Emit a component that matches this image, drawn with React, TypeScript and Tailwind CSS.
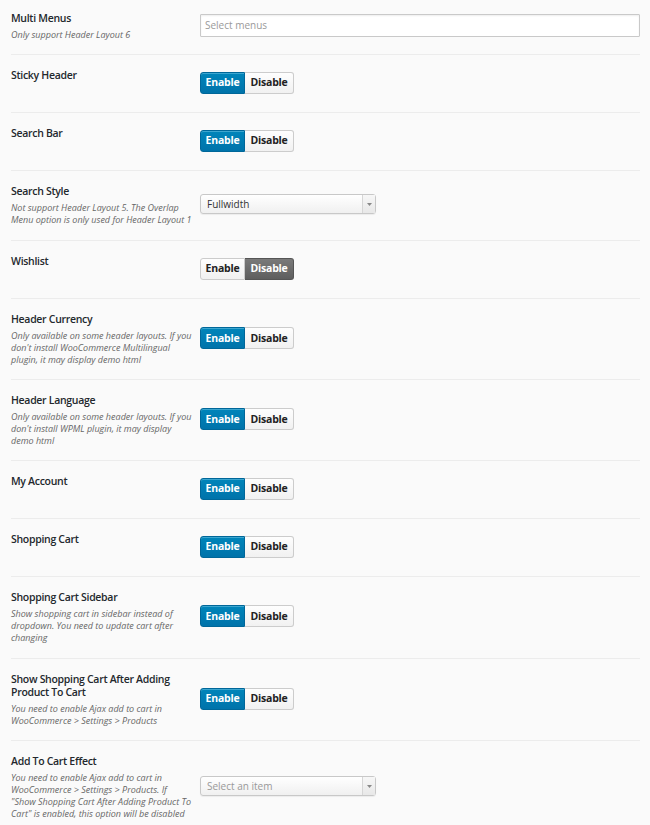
import React from "react";

type Ctl = "multi" | "on" | "off" | "select";
interface Row {
  title: string;
  desc?: string;
  ctl: Ctl;
  value?: string;
  placeholder?: boolean;
  extra?: boolean;
}

const rows: Row[] = [
  { title: "Multi Menus", desc: "Only support Header Layout 6", ctl: "multi" },
  { title: "Sticky Header", ctl: "on" },
  { title: "Search Bar", ctl: "on" },
  {
    title: "Search Style",
    desc: "Not support Header Layout 5. The Overlap Menu option is only used for Header Layout 1",
    ctl: "select",
    value: "Fullwidth",
    extra: true,
  },
  { title: "Wishlist", ctl: "off" },
  {
    title: "Header Currency",
    desc: "Only available on some header layouts. If you don't install WooCommerce Multilingual plugin, it may display demo html",
    ctl: "on",
  },
  {
    title: "Header Language",
    desc: "Only available on some header layouts. If you don't install WPML plugin, it may display demo html",
    ctl: "on",
  },
  { title: "My Account", ctl: "on" },
  { title: "Shopping Cart", ctl: "on" },
  {
    title: "Shopping Cart Sidebar",
    desc: "Show shopping cart in sidebar instead of dropdown. You need to update cart after changing",
    ctl: "on",
    extra: true,
  },
  {
    title: "Show Shopping Cart After Adding Product To Cart",
    desc: "You need to enable Ajax add to cart in WooCommerce > Settings > Products",
    ctl: "on",
  },
  {
    title: "Add To Cart Effect",
    desc: "You need to enable Ajax add to cart in WooCommerce > Settings > Products. If \"Show Shopping Cart After Adding Product To Cart\" is enabled, this option will be disabled",
    ctl: "select",
    value: "Select an item",
    placeholder: true,
  },
];

function Toggle({ on }: { on: boolean }) {
  return (
    <div className="flex h-[22px] text-[10.5px] font-bold leading-none tracking-[-0.2px]">
      <div
        className={
          on
            ? "flex w-[45px] items-center justify-center rounded-l-[3px] border border-[#006799] bg-gradient-to-b from-[#0085ba] to-[#0073aa] text-white shadow-[inset_0_1px_0_rgba(120,200,230,0.5)]"
            : "flex w-[45px] items-center justify-center rounded-l-[3px] border border-[#cccccc] bg-gradient-to-b from-[#fefefe] to-[#f1f1f1] text-[#222222]"
        }
      >
        Enable
      </div>
      <div
        className={
          on
            ? "flex w-[49px] items-center justify-center rounded-r-[3px] border border-l-0 border-[#cccccc] bg-gradient-to-b from-[#fefefe] to-[#f1f1f1] text-[#222222]"
            : "flex w-[49px] items-center justify-center rounded-r-[3px] border border-l-0 border-[#555555] bg-gradient-to-b from-[#7a7a7a] to-[#5e5e5e] text-white"
        }
      >
        Disable
      </div>
    </div>
  );
}

function Select({ value, placeholder }: { value: string; placeholder?: boolean }) {
  return (
    <div className="flex h-[20px] w-[176px] items-stretch rounded-[3px] border border-[#c8c8c8] bg-gradient-to-b from-[#ffffff] to-[#f0f0f0] shadow-[0_1px_1px_rgba(0,0,0,0.06)]">
      <div
        className={
          placeholder
            ? "flex flex-1 items-center pl-[6px] text-[10px] text-[#999999]"
            : "flex flex-1 items-center pl-[6px] text-[10px] text-[#333333]"
        }
      >
        {value}
      </div>
      <div className="flex w-[13px] items-center justify-center border-l border-[#d6d6d6] bg-gradient-to-b from-[#f7f7f7] to-[#e8e8e8]">
        <svg width="5" height="3" viewBox="0 0 5 3">
          <path d="M0 0 H5 L2.5 3 Z" fill="#888888" />
        </svg>
      </div>
    </div>
  );
}

export default function App() {
  return (
    <div
      className="min-h-[825px] w-[650px] bg-[#fafafa] pl-[11px] pr-[10px]"
      style={{ fontFamily: '"Open Sans", "Noto Sans", sans-serif' }}
    >
      {rows.map((r, i) => (
        <div
          key={i}
          className={
            i === 0
              ? "flex border-b border-[#ececec] pt-[12px] pb-[13px]"
              : r.extra
              ? "flex border-b border-[#ececec] pt-[14px] pb-[14px] min-h-[58px]"
              : "flex border-b border-[#ececec] pt-[14px] pb-[13px] min-h-[58px]"
          }
        >
          <div className="w-[189px] shrink-0 self-start pr-[8px]">
            <div className="text-[10.5px] font-semibold leading-[13px] tracking-[-0.3px] text-[#23282d]">
              {r.title}
            </div>
            {r.desc && (
              <div className="mt-[4px] text-[9px] italic leading-[12px] text-[#666666]">
                {r.desc}
              </div>
            )}
          </div>
          <div className="mb-[3px] flex flex-1 items-center self-center">
            {r.ctl === "multi" && (
              <div className="flex h-[23px] w-full items-center rounded-[1px] border border-[#c9c9c9] bg-white pl-[4px] text-[10px] text-[#9a9a9a] shadow-[inset_0_1px_2px_rgba(0,0,0,0.07)]">
                Select menus
              </div>
            )}
            {r.ctl === "on" && <Toggle on={true} />}
            {r.ctl === "off" && <Toggle on={false} />}
            {r.ctl === "select" && <Select value={r.value!} placeholder={r.placeholder} />}
          </div>
        </div>
      ))}
    </div>
  );
}
